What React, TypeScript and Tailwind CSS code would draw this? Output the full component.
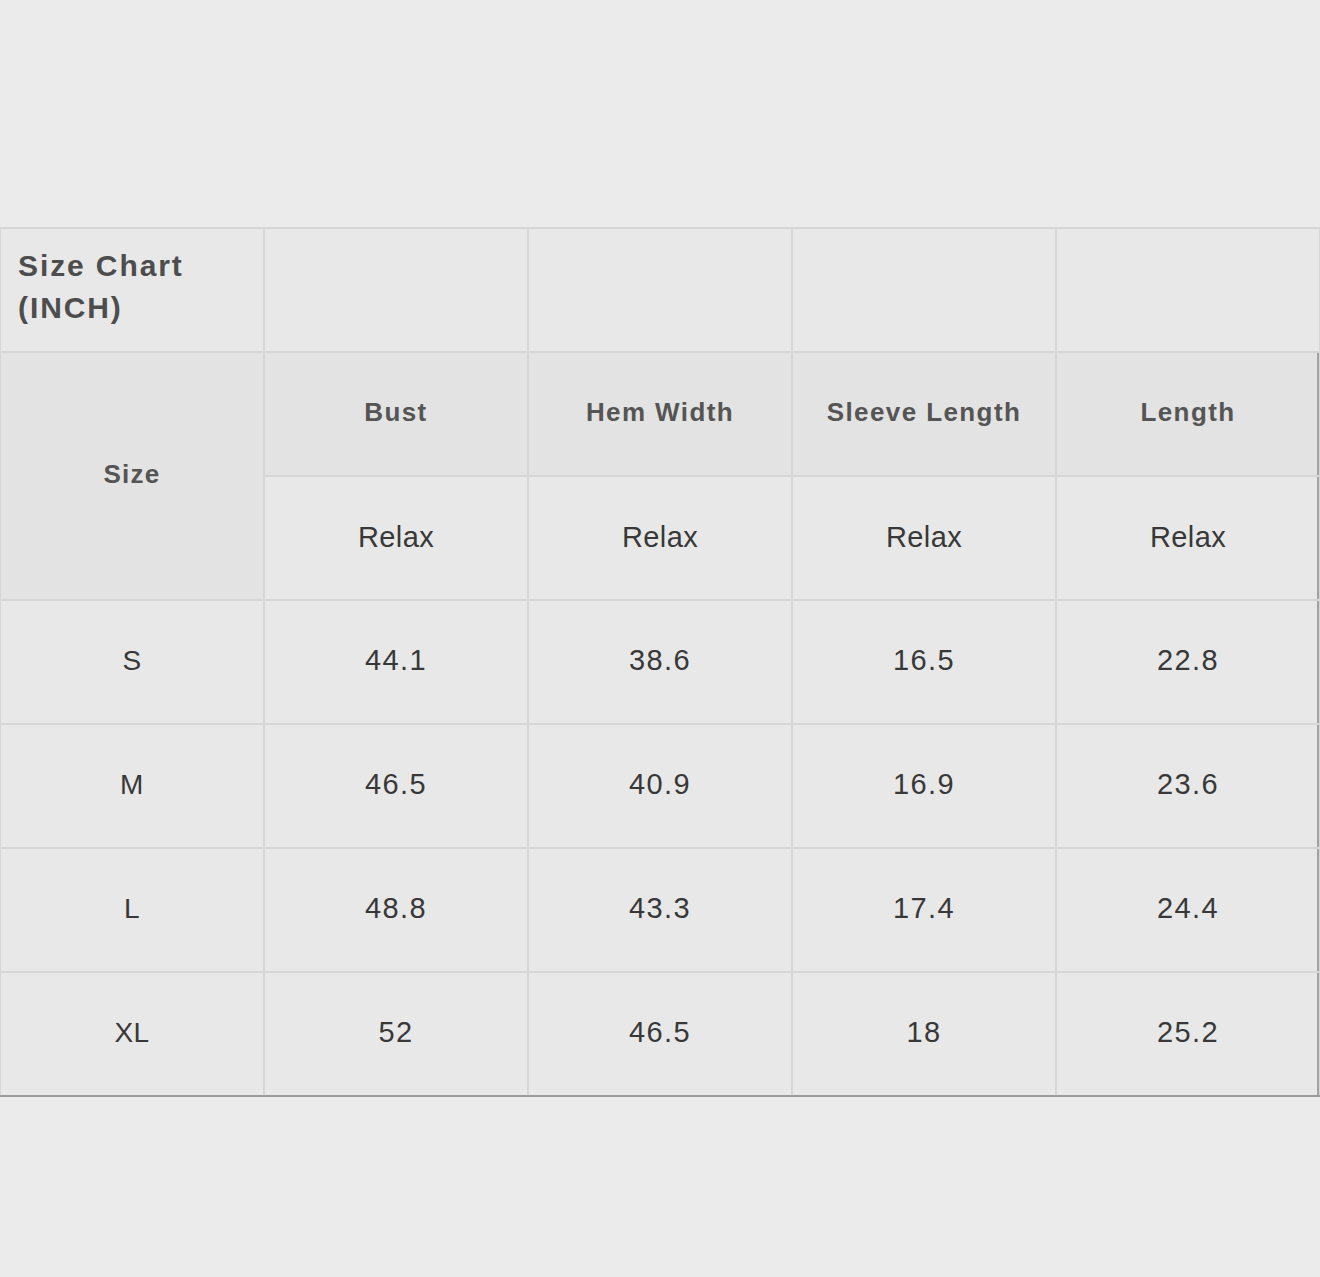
const columns = ['Bust', 'Hem Width', 'Sleeve Length', 'Length'];

const rows = [
    { size: 'S', values: ['44.1', '38.6', '16.5', '22.8'] },
    { size: 'M', values: ['46.5', '40.9', '16.9', '23.6'] },
    { size: 'L', values: ['48.8', '43.3', '17.4', '24.4'] },
    { size: 'XL', values: ['52', '46.5', '18', '25.2'] },
];

const edge = 'shadow-[inset_-2px_0_0_#a3a3a3]';

export default function App() {
    return (
        <div className="min-h-[1277px] w-[1320px] bg-[#ebebeb] pt-[227px] font-['Liberation_Sans',Arial,sans-serif]">
            <div className="grid grid-cols-[262px_262px_262px_262px_262px] auto-rows-[122px] gap-[2px] bg-[#d6d6d6] pl-px pt-[2px] border-b-2 border-[#9c9c9c] w-[1320px]">
                {/* Title row */}
                <div className="bg-[#e8e8e8] flex items-center pl-[17px] pb-[6px] text-[30px] leading-[42px] font-bold tracking-[1.9px] text-[#4d4d4d]">
                    <div>
                        Size Chart
                        <br />
                        (INCH)
                    </div>
                </div>
                {columns.map(c => (
                    <div key={c} className="bg-[#e8e8e8]" />
                ))}

                {/* Header */}
                <div className="row-span-2 bg-[#e3e3e3] flex items-center justify-center pb-[4px] text-[26px] font-bold tracking-[1.2px] text-[#555555]">
                    Size
                </div>
                {columns.map((c, i) => (
                    <div
                        key={c}
                        className={`bg-[#e3e3e3] flex items-center justify-center pb-[4px] text-[26px] font-bold tracking-[1.4px] text-[#555555] ${i === 3 ? edge : ''}`}
                    >
                        {c}
                    </div>
                ))}
                {columns.map((c, i) => (
                    <div
                        key={c + '-relax'}
                        className={`bg-[#e8e8e8] flex items-center justify-center text-[29px] tracking-[0.4px] text-[#383838] ${i === 3 ? edge : ''}`}
                    >
                        Relax
                    </div>
                ))}

                {/* Data rows */}
                {rows.map(r => (
                    <div key={r.size} className="contents">
                        <div className="bg-[#e8e8e8] flex items-center justify-center pb-[2px] text-[28px] tracking-[0.5px] text-[#383838]">
                            {r.size}
                        </div>
                        {r.values.map((v, i) => (
                            <div
                                key={i}
                                className={`bg-[#e8e8e8] flex items-center justify-center pb-[2px] text-[29px] tracking-[1.4px] text-[#383838] ${i === 3 ? edge : ''}`}
                            >
                                {v}
                            </div>
                        ))}
                    </div>
                ))}
            </div>
        </div>
    );
}
